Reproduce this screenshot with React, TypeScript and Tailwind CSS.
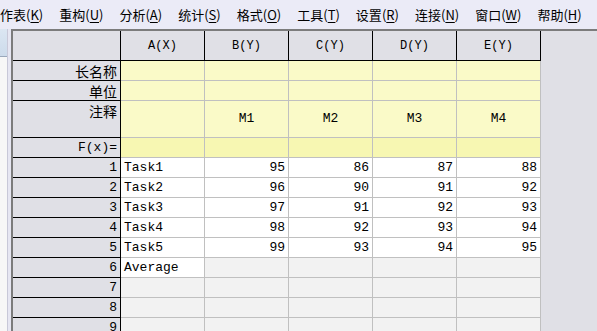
import React from 'react';

const menus = [
  ['工作表', 'K'],
  ['重构', 'U'],
  ['分析', 'A'],
  ['统计', 'S'],
  ['格式', 'O'],
  ['工具', 'T'],
  ['设置', 'R'],
  ['连接', 'N'],
  ['窗口', 'W'],
  ['帮助', 'H'],
];

const cols = ['A(X)', 'B(Y)', 'C(Y)', 'D(Y)', 'E(Y)'];

const data: (string | number)[][] = [
  ['Task1', 95, 86, 87, 88],
  ['Task2', 96, 90, 91, 92],
  ['Task3', 97, 91, 92, 93],
  ['Task4', 98, 92, 93, 94],
  ['Task5', 99, 93, 94, 95],
  ['Average'],
  [],
  [],
  [],
];

const mono = "font-['Liberation_Mono','Noto_Sans_CJK_SC',monospace]";
const cjk = "font-['Noto_Sans_CJK_SC',sans-serif]";

function RowHead({ children, h, top }: { children?: React.ReactNode; h: string; top?: boolean }) {
  return (
    <div
      className={`w-[108px] shrink-0 ${h} border-r border-b border-black bg-[#e0e0e6] flex justify-end pr-[3px] ${
        top ? 'items-start pt-[1px]' : 'items-center'
      }`}
    >
      {children}
    </div>
  );
}

export default function App() {
  return (
    <div className="w-[597px] h-[331px] overflow-hidden bg-[#e0e0e6] text-black">
      {/* menu bar */}
      <div className={`h-[29px] bg-[#ebebf7] flex items-center gap-[16px] ml-[-13px] text-[13px] ${cjk}`}>
        {menus.map(([name, key]) => (
          <span key={name} className="whitespace-nowrap">
            {name}(<span className="underline underline-offset-2">{key}</span>)
          </span>
        ))}
      </div>

      <div className="flex h-[302px]">
        {/* left panel strip */}
        <div className="w-[11px] shrink-0 flex bg-[#e6e6f2]">
          <div className="w-[8px] flex flex-col border-r border-[#c8c8d8]">
            <div className="h-[28px] bg-gradient-to-b from-[#dbe6f2] to-[#cddbeb] border-b border-[#9aa8bb]" />
            <div className="flex-1 bg-[#f7f7f7]" />
          </div>
        </div>

        {/* worksheet */}
        <div className="flex-1 border-t-2 border-l-2 border-[#7c7c7c] bg-[#e0e0e6]">
          {/* column header row */}
          <div className="flex">
            <RowHead h="h-[30px]" />
            {cols.map((c) => (
              <div
                key={c}
                className={`w-[84px] h-[30px] shrink-0 border-r border-b border-black flex items-center justify-center text-[12px] ${mono}`}
              >
                {c}
              </div>
            ))}
          </div>

          {/* label rows */}
          {[
            { label: '长名称', h: 'h-[20px]', bg: 'bg-[#fafac8]' },
            { label: '单位', h: 'h-[20px]', bg: 'bg-[#fafac8]' },
            { label: '注释', h: 'h-[37px]', bg: 'bg-[#fafac8]', m: true },
            { label: 'F(x)=', h: 'h-[20px]', bg: 'bg-[#f7f7b2]' },
          ].map((r) => (
            <div key={r.label} className="flex">
              <RowHead h={r.h} top={r.m}>
                <span className={`${r.label === 'F(x)=' ? mono + ' text-[13px]' : cjk + ' text-[14px] leading-[18px]'}`}>
                  {r.label}
                </span>
              </RowHead>
              {cols.map((c, i) => (
                <div
                  key={c}
                  className={`w-[84px] ${r.h} shrink-0 border-r border-b border-[#c0c0c0] ${r.bg} flex items-center justify-center text-[13px] ${mono}`}
                >
                  {r.m && i > 0 ? `M${i}` : ''}
                </div>
              ))}
            </div>
          ))}

          {/* data rows */}
          {data.map((row, ri) => (
            <div key={ri} className="flex">
              <RowHead h="h-[20px]">
                <span className={`text-[13px] ${mono}`}>{ri + 1}</span>
              </RowHead>
              {cols.map((c, ci) => {
                const v = row[ci];
                const filled = v !== undefined;
                return (
                  <div
                    key={c}
                    className={`w-[84px] h-[20px] shrink-0 border-r border-b border-[#c0c0c0] flex items-center text-[13px] ${mono} ${
                      filled ? 'bg-white' : 'bg-[#f2f2f2]'
                    } ${ci === 0 ? 'justify-start pl-[3px]' : 'justify-end pr-[3px]'}`}
                  >
                    {filled ? v : ''}
                  </div>
                );
              })}
            </div>
          ))}
        </div>
      </div>
    </div>
  );
}
